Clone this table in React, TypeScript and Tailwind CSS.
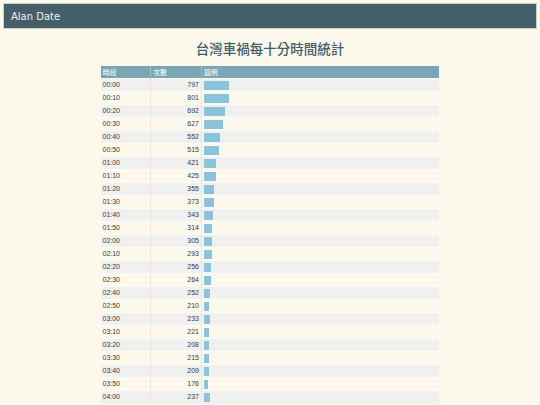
const rows: [string, number][] = [
  ["00:00", 797], ["00:10", 801], ["00:20", 692], ["00:30", 627], ["00:40", 552],
  ["00:50", 515], ["01:00", 421], ["01:10", 425], ["01:20", 355], ["01:30", 373],
  ["01:40", 343], ["01:50", 314], ["02:00", 305], ["02:10", 293], ["02:20", 256],
  ["02:30", 264], ["02:40", 252], ["02:50", 210], ["03:00", 233], ["03:10", 221],
  ["03:20", 208], ["03:30", 215], ["03:40", 209], ["03:50", 176], ["04:00", 237],
];

export default function App() {
  return (
    <div className="min-h-screen bg-[#fcf8ec] pt-[3px] px-[3px] font-['Liberation_Sans',sans-serif]">
      <div className="h-[26px] bg-[#455f66] border border-[#c8d2c6] flex items-center pl-[7px]">
        <span className="text-[10px] text-[#eef2f2] font-['DejaVu_Sans',sans-serif]">Alan Date</span>
      </div>
      <h1 className="mt-[9px] text-center text-[13.5px] leading-[20px] text-[#435c65] font-medium font-['Noto_Sans_CJK_TC',sans-serif]">
        台灣車禍每十分時間統計
      </h1>
      <div className="mt-[8px] flex justify-center">
        <table className="w-[338px] border-collapse table-fixed text-[7px] text-[#3a3a3a] ml-[-1px]">
          <colgroup>
            <col className="w-[50px]" />
            <col className="w-[51px]" />
            <col />
          </colgroup>
          <thead>
            <tr className="bg-[#7aa6b3] h-[12px] text-white">
              <th className="text-left font-normal pl-[2px] border-r border-[#9dbfc8] font-['Noto_Sans_CJK_TC',sans-serif] leading-[12px]">時段</th>
              <th className="text-left font-normal pl-[2px] border-r border-[#9dbfc8] font-['Noto_Sans_CJK_TC',sans-serif] leading-[12px]">次數</th>
              <th className="text-left font-normal pl-[2px] font-['Noto_Sans_CJK_TC',sans-serif] leading-[12px]">圖例</th>
            </tr>
          </thead>
          <tbody>
            {rows.map(([t, n], i) => (
              <tr key={t} className={`h-[13px] border-t border-[#fbfbf8] ${i % 2 === 0 ? "bg-[#f0f0ef]" : "bg-[#fcf8ec]"}`}>
                <td className="pl-[2px] border-r border-[#ebe6d8] leading-[12px]">{t}</td>
                <td className="text-right pr-[2px] border-r border-[#ebe6d8] leading-[12px]">{n}</td>
                <td className="pl-[2px] leading-[12px]">
                  <div className="h-[9px] bg-[#8bc3db]" style={{ width: Math.round(n / 30 - 2) }} />
                </td>
              </tr>
            ))}
          </tbody>
        </table>
      </div>
    </div>
  );
}
